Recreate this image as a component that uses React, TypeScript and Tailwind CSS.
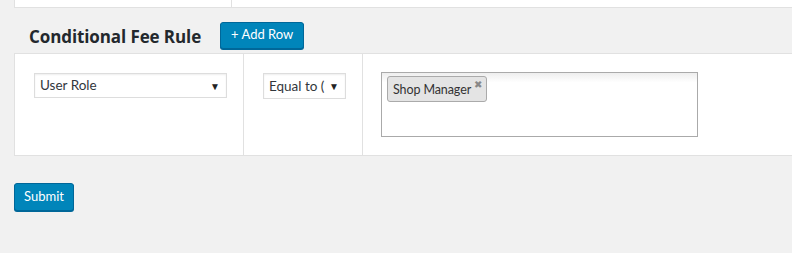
import { useState } from "react";

const font = { fontFamily: '"Segoe UI", "Open Sans", "Liberation Sans", sans-serif' };
const small = { fontFamily: 'Lato, "Open Sans", "Liberation Sans", sans-serif' };

function Caret() {
  return <span className="text-[10px] leading-none text-[#222]">▼</span>;
}

export default function App() {
  const [tags, setTags] = useState<string[]>(["Shop Manager"]);

  return (
    <div className="w-[792px] h-[253px] overflow-hidden bg-[#f1f1f1] text-[#23282d]" style={font}>
      {/* tail of the previous table */}
      <div className="ml-[14px] h-[8px] bg-white border-l border-b border-[#e1e1e1] flex">
        <div className="w-[217px] border-r border-[#e1e1e1]" />
      </div>

      <div className="flex items-center pl-[29px] pt-[9px] h-[45px]">
        <h2 className="text-[17px] font-bold leading-none tracking-[-0.1px] mt-[2px]">Conditional Fee Rule</h2>
        <button style={small} className="ml-[19px] h-[27px] px-[10px] rounded-[3px] bg-[#0085ba] border border-[#006799] text-white text-[13px] whitespace-nowrap shadow-[0_1px_0_#006799]">
          + Add Row
        </button>
      </div>

      <div style={small} className="ml-[14px] h-[103px] bg-white border border-r-0 border-[#e1e1e1] flex text-[13.5px]">
        <div className="w-[229px] border-r border-[#e1e1e1] pl-[19px] pt-[19px]">
          <div className="w-[193px] h-[25px] border border-[#ddd] shadow-[inset_0_1px_2px_rgba(0,0,0,0.07)] flex items-center justify-between pl-[5px] pr-[6px] text-[#32373c]">
            <span>User Role</span>
            <Caret />
          </div>
        </div>
        <div className="w-[119px] border-r border-[#e1e1e1] pl-[19px] pt-[19px]">
          <div className="w-[83px] h-[26px] border border-[#ddd] shadow-[inset_0_1px_2px_rgba(0,0,0,0.07)] flex items-center justify-between pl-[5px] pr-[6px] text-[#32373c] whitespace-nowrap">
            <span>Equal to (</span>
            <Caret />
          </div>
        </div>
        <div className="flex-1 pl-[18px] pt-[18px]">
          <div className="w-[317px] h-[65px] border border-[#aaa] bg-[linear-gradient(#eee_0%,#fff_15%)] pl-[5px] pt-[3px]">
            {tags.map(t => (
              <div key={t} className="relative inline-flex items-start h-[26px] w-[100px] pl-[5px] border border-[#aaa] rounded-[3px] bg-[#e4e4e4] text-[#333] whitespace-nowrap">
                <span className="mt-[4px] text-[12.5px] tracking-[-0.1px]">{t}</span>
                <button onClick={() => setTags(tags.filter(x => x !== t))} className="absolute right-[4px] top-[2px] text-[10px] text-[#888] leading-none">✖</button>
              </div>
            ))}
          </div>
        </div>
      </div>

      <div className="pl-[14px] pt-[27px]">
        <button style={small} className="h-[28px] px-[9px] rounded-[3px] bg-[#0085ba] border border-[#006799] text-white text-[13px] shadow-[0_1px_0_#006799]">
          Submit
        </button>
      </div>
    </div>
  );
}
